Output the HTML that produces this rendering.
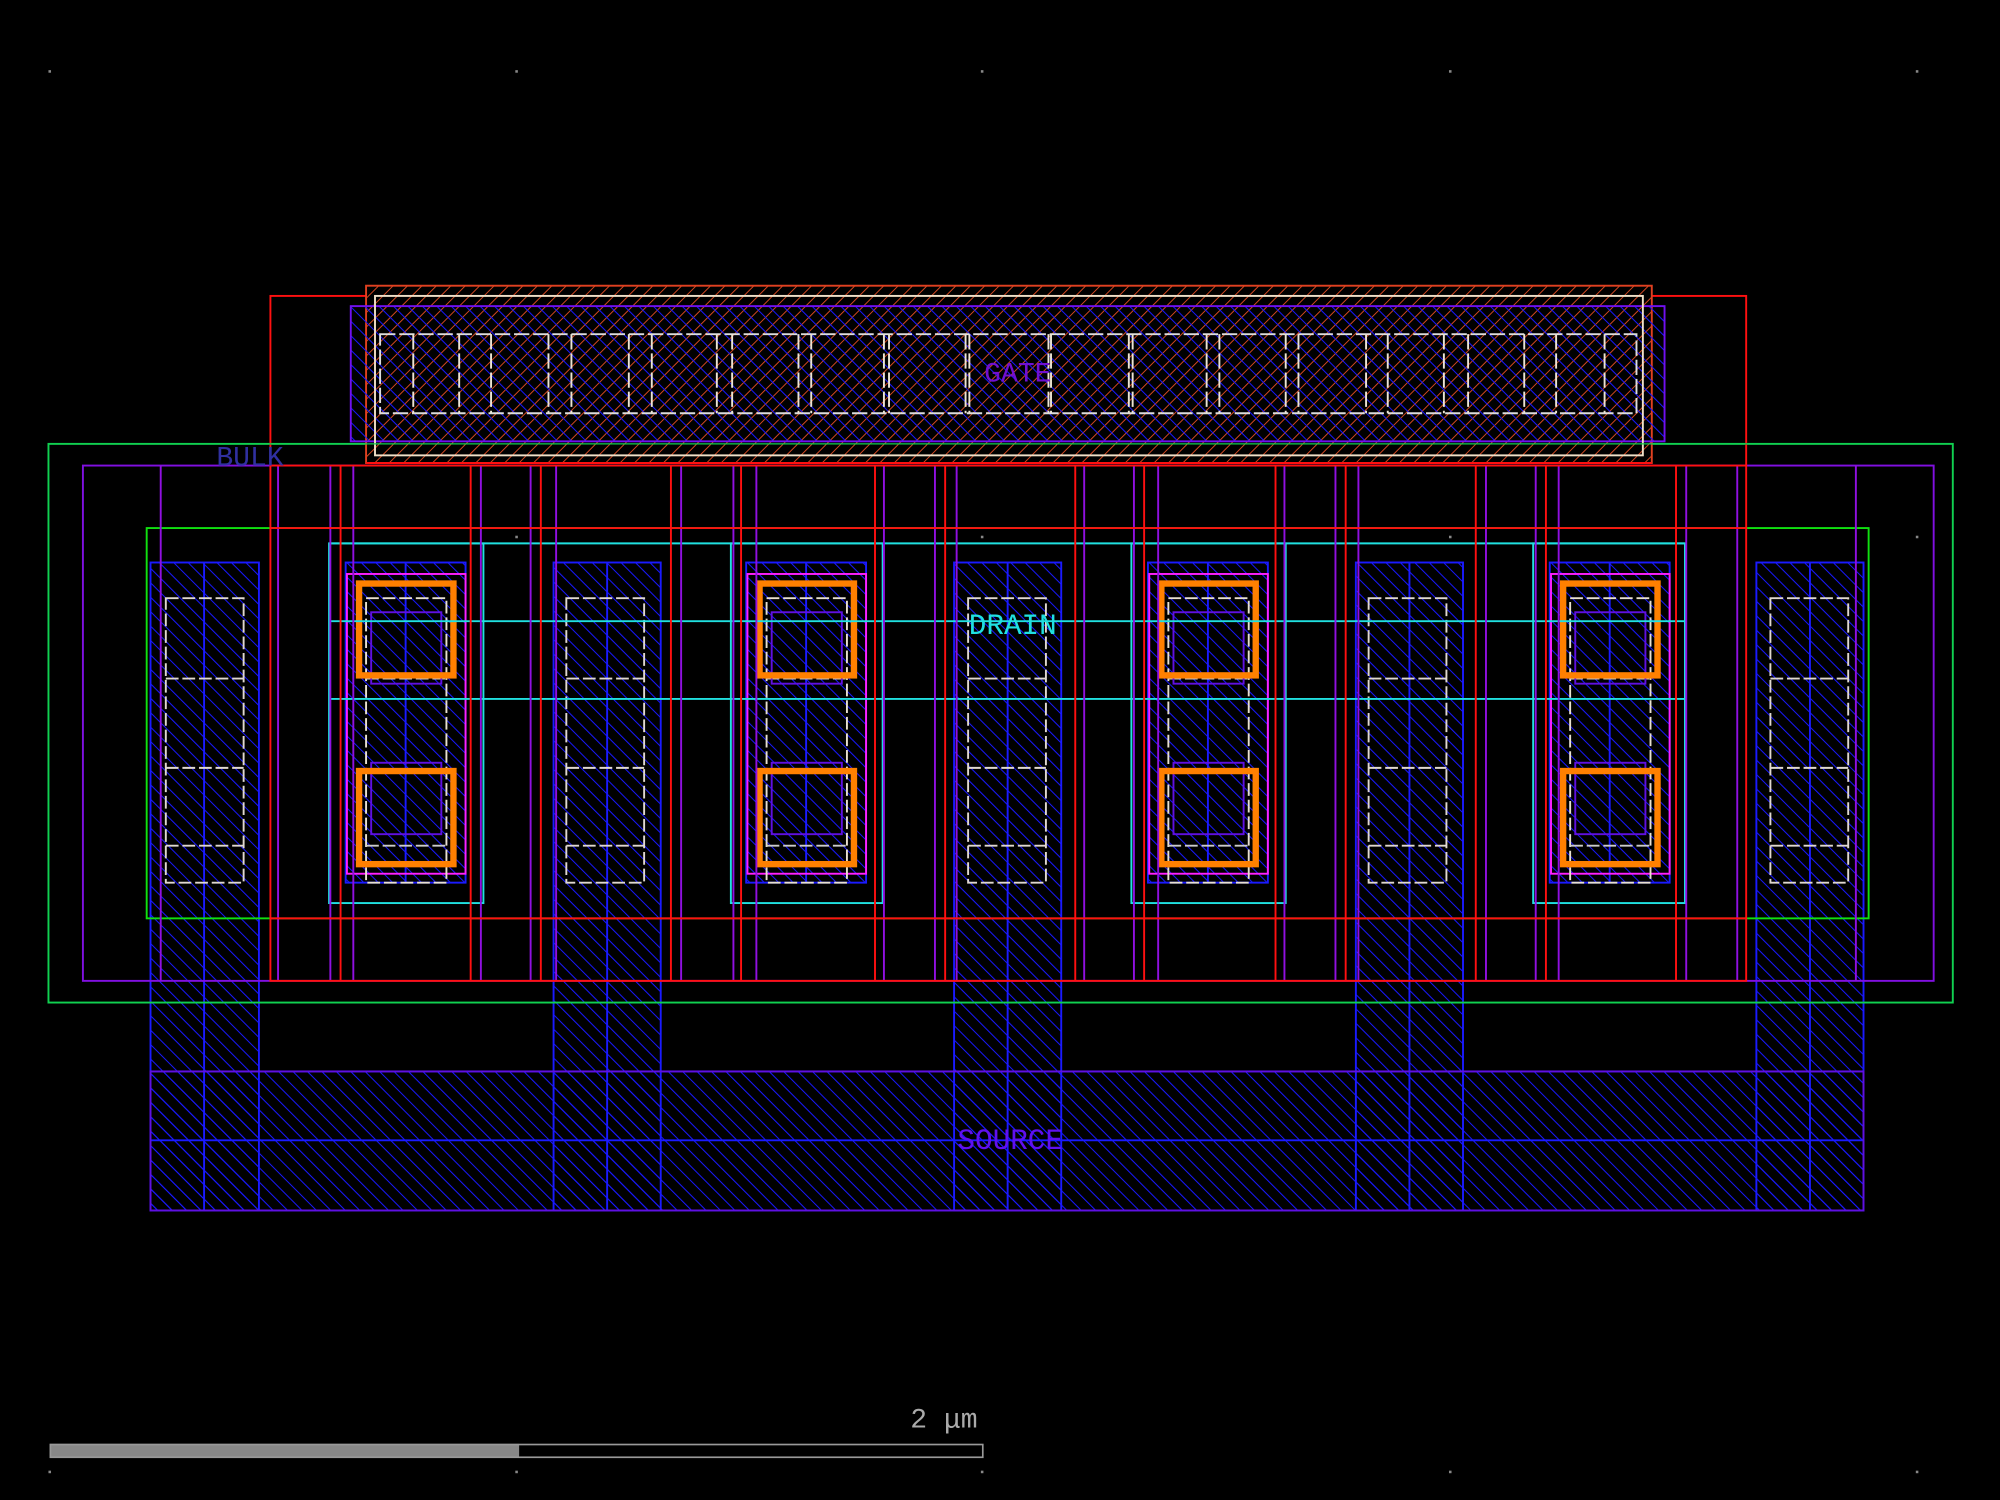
<!DOCTYPE html>
<html><head><meta charset="utf-8"><style>
html,body{margin:0;padding:0;background:#000;width:2000px;height:1500px;overflow:hidden}
svg{display:block}
text{font-family:"Liberation Mono","DejaVu Sans Mono",monospace}
</style></head><body>
<svg width="2000" height="1500" viewBox="0 0 1568 1176" preserveAspectRatio="none" xmlns="http://www.w3.org/2000/svg">
<defs>
<pattern id="hb" width="8" height="8" patternUnits="userSpaceOnUse" patternTransform="rotate(-45)">
<line x1="0" y1="0" x2="0" y2="8" stroke="#1818ff" stroke-width="1.6"/></pattern>
<pattern id="ho" width="8" height="8" patternUnits="userSpaceOnUse" patternTransform="rotate(45)">
<line x1="0" y1="0" x2="0" y2="8" stroke="#d84a22" stroke-width="1.5"/></pattern>
</defs>
<rect width="1568" height="1176" fill="#000"/>
<g fill="#888">
<rect x="38" y="55" width="2" height="2"/><rect x="404" y="55" width="2" height="2"/><rect x="769" y="55" width="2" height="2"/><rect x="1136" y="55" width="2" height="2"/><rect x="1502" y="55" width="2" height="2"/>
<rect x="38" y="1153" width="2" height="2"/><rect x="404" y="1153" width="2" height="2"/><rect x="769" y="1153" width="2" height="2"/><rect x="1136" y="1153" width="2" height="2"/><rect x="1502" y="1153" width="2" height="2"/>
<rect x="404" y="420" width="2" height="2"/><rect x="769" y="420" width="2" height="2"/><rect x="1136" y="420" width="2" height="2"/><rect x="1502" y="420" width="2" height="2"/>
</g>

<g fill="url(#hb)" stroke="#1a1aff" stroke-width="1.5">
<rect x="118" y="441" width="85" height="508"/>
<rect x="434" y="441" width="84" height="508"/>
<rect x="748" y="441" width="84" height="508"/>
<rect x="1063" y="441" width="84" height="508"/>
<rect x="1377" y="441" width="84" height="508"/>
<rect x="118" y="840" width="1343" height="109"/>
</g>
<g stroke="#1a1aff" stroke-width="1.5">
<line x1="160" y1="441" x2="160" y2="949"/><line x1="476" y1="441" x2="476" y2="949"/><line x1="790" y1="441" x2="790" y2="949"/><line x1="1105" y1="441" x2="1105" y2="949"/><line x1="1419" y1="441" x2="1419" y2="949"/>
<line x1="118" y1="894" x2="1461" y2="894"/>
</g>
<rect x="118" y="840" width="1343" height="109" fill="none" stroke="#6010e0" stroke-width="1.5"/>

<g id="df">
<rect x="271" y="441" width="94" height="251" fill="url(#hb)" stroke="#1a1aff" stroke-width="1.5"/>
<line x1="318" y1="441" x2="318" y2="692" stroke="#1a1aff" stroke-width="1.5"/>
<rect x="272" y="450" width="93" height="235" fill="none" stroke="#ff20ff" stroke-width="1.5"/>
<rect x="287" y="469" width="63" height="223" fill="none" stroke="#e8e0d0" stroke-width="1.5" stroke-dasharray="10,3"/>
<line x1="287" y1="532" x2="350" y2="532" stroke="#ccc" stroke-width="1.5" stroke-dasharray="10,3"/>
<line x1="287" y1="663" x2="350" y2="663" stroke="#ccc" stroke-width="1.5" stroke-dasharray="10,3"/>
<rect x="291" y="480" width="55" height="56" fill="none" stroke="#6010e0" stroke-width="1.5"/>
<rect x="291" y="598" width="55" height="56" fill="none" stroke="#6010e0" stroke-width="1.5"/>
<rect x="281.5" y="457.5" width="74" height="72" fill="none" stroke="#ff8000" stroke-width="5"/>
<rect x="281.5" y="604.5" width="74" height="73" fill="none" stroke="#ff8000" stroke-width="5"/>
</g>
<use href="#df" x="314"/><use href="#df" x="629"/><use href="#df" x="944"/>

<g id="sf" fill="none" stroke="#e0d8d0" stroke-width="1.5" stroke-dasharray="10,3">
<rect x="130" y="469" width="61" height="223"/>
<line x1="130" y1="532" x2="191" y2="532"/><line x1="130" y1="602" x2="191" y2="602"/><line x1="130" y1="663" x2="191" y2="663"/>
</g>
<use href="#sf" x="314"/><use href="#sf" x="629"/><use href="#sf" x="943"/><use href="#sf" x="1258"/>

<g fill="none" stroke="#20e0e0" stroke-width="1.5">
<rect x="258" y="426" width="121" height="282"/>
<rect x="573" y="426" width="119" height="282"/>
<rect x="887" y="426" width="121" height="282"/>
<rect x="1202" y="426" width="119" height="282"/>
<line x1="258" y1="426" x2="1321" y2="426"/>
<line x1="258" y1="487" x2="1321" y2="487"/>
<line x1="258" y1="548" x2="1321" y2="548"/>
</g>

<rect x="38" y="348" width="1493" height="438" fill="none" stroke="#10d050" stroke-width="1.5"/>
<rect x="65" y="365" width="1451" height="404" fill="none" stroke="#8010e0" stroke-width="1.5"/>
<rect x="115" y="414" width="1350" height="306" fill="none" stroke="#10e010" stroke-width="1.5"/>

<g stroke="#9010e0" stroke-width="1.5">
<line x1="126" y1="365" x2="126" y2="769"/><line x1="1455" y1="365" x2="1455" y2="769"/>
<line x1="218" y1="365" x2="218" y2="769"/><line x1="259" y1="365" x2="259" y2="769"/><line x1="277" y1="365" x2="277" y2="769"/><line x1="377" y1="365" x2="377" y2="769"/><line x1="416" y1="365" x2="416" y2="769"/><line x1="436" y1="365" x2="436" y2="769"/>
<line x1="534" y1="365" x2="534" y2="769"/><line x1="575" y1="365" x2="575" y2="769"/><line x1="593" y1="365" x2="593" y2="769"/><line x1="693" y1="365" x2="693" y2="769"/><line x1="733" y1="365" x2="733" y2="769"/><line x1="750" y1="365" x2="750" y2="769"/>
<line x1="850" y1="365" x2="850" y2="769"/><line x1="889" y1="365" x2="889" y2="769"/><line x1="908" y1="365" x2="908" y2="769"/><line x1="1007" y1="365" x2="1007" y2="769"/><line x1="1047" y1="365" x2="1047" y2="769"/><line x1="1065" y1="365" x2="1065" y2="769"/>
<line x1="1165" y1="365" x2="1165" y2="769"/><line x1="1204" y1="365" x2="1204" y2="769"/><line x1="1222" y1="365" x2="1222" y2="769"/><line x1="1322" y1="365" x2="1322" y2="769"/><line x1="1362" y1="365" x2="1362" y2="769"/>
</g>
<g stroke="#ff1010" stroke-width="1.5" fill="none">
<rect x="212" y="232" width="1157" height="537"/>
<line x1="212" y1="365" x2="1369" y2="365"/>
<line x1="212" y1="414" x2="1369" y2="414"/>
<line x1="212" y1="720" x2="1369" y2="720"/>
<line x1="267" y1="365" x2="267" y2="769"/><line x1="369" y1="365" x2="369" y2="769"/><line x1="424" y1="365" x2="424" y2="769"/><line x1="526" y1="365" x2="526" y2="769"/><line x1="581" y1="365" x2="581" y2="769"/><line x1="686" y1="365" x2="686" y2="769"/><line x1="741" y1="365" x2="741" y2="769"/><line x1="843" y1="365" x2="843" y2="769"/><line x1="897" y1="365" x2="897" y2="769"/><line x1="1000" y1="365" x2="1000" y2="769"/><line x1="1055" y1="365" x2="1055" y2="769"/><line x1="1157" y1="365" x2="1157" y2="769"/><line x1="1212" y1="365" x2="1212" y2="769"/><line x1="1314" y1="365" x2="1314" y2="769"/>
</g>

<rect x="287" y="224" width="1008" height="139" fill="#000"/>
<rect x="287" y="224" width="1008" height="139" fill="url(#ho)" stroke="#e04020" stroke-width="1.5"/>
<rect x="275" y="240" width="1030" height="106" fill="url(#hb)" stroke="#7010f0" stroke-width="1.5"/>
<rect x="294" y="232" width="994" height="125" fill="none" stroke="#f0e0c8" stroke-width="1.5"/>
<line x1="38" y1="348" x2="1531" y2="348" stroke="#10d050" stroke-width="1"/>
<rect x="298" y="262" width="985" height="62" fill="none" stroke="#ddd" stroke-width="1.5" stroke-dasharray="12,3"/>
<g stroke="#ece4d4" stroke-width="1.5" stroke-dasharray="12,3">
<line x1="324" y1="262" x2="324" y2="324"/><line x1="360" y1="262" x2="360" y2="324"/><line x1="385" y1="262" x2="385" y2="324"/><line x1="430" y1="262" x2="430" y2="324"/><line x1="448" y1="262" x2="448" y2="324"/><line x1="493" y1="262" x2="493" y2="324"/><line x1="511" y1="262" x2="511" y2="324"/><line x1="562" y1="262" x2="562" y2="324"/><line x1="574" y1="262" x2="574" y2="324"/><line x1="626" y1="262" x2="626" y2="324"/><line x1="636" y1="262" x2="636" y2="324"/><line x1="693" y1="262" x2="693" y2="324"/><line x1="697" y1="262" x2="697" y2="324"/><line x1="757" y1="262" x2="757" y2="324"/><line x1="760" y1="262" x2="760" y2="324"/><line x1="822" y1="262" x2="822" y2="324"/><line x1="824" y1="262" x2="824" y2="324"/><line x1="885" y1="262" x2="885" y2="324"/><line x1="888" y1="262" x2="888" y2="324"/><line x1="946" y1="262" x2="946" y2="324"/><line x1="956" y1="262" x2="956" y2="324"/><line x1="1008" y1="262" x2="1008" y2="324"/><line x1="1018" y1="262" x2="1018" y2="324"/><line x1="1071" y1="262" x2="1071" y2="324"/><line x1="1088" y1="262" x2="1088" y2="324"/><line x1="1132" y1="262" x2="1132" y2="324"/><line x1="1151" y1="262" x2="1151" y2="324"/><line x1="1195" y1="262" x2="1195" y2="324"/><line x1="1220" y1="262" x2="1220" y2="324"/><line x1="1258" y1="262" x2="1258" y2="324"/>
</g>
<line x1="287" y1="363" x2="1295" y2="363" stroke="#ff1010" stroke-width="1.5"/>

<text x="798" y="299" font-size="22" fill="#7010d0" text-anchor="middle">GATE</text>
<text x="794" y="497" font-size="23" fill="#20e0e0" text-anchor="middle">DRAIN</text>
<text x="792" y="901" font-size="23" fill="#6010f0" text-anchor="middle">SOURCE</text>
<text x="196" y="365" font-size="22" fill="#3030a0" text-anchor="middle">BULK</text>
<text x="740" y="1119" font-size="22" fill="#aaa" text-anchor="middle">2 μm</text>

<rect x="39" y="1132" width="368" height="11" fill="#888"/>
<rect x="39.5" y="1132.5" width="731" height="10" fill="none" stroke="#999" stroke-width="1.3"/>
</svg>
</body></html>
